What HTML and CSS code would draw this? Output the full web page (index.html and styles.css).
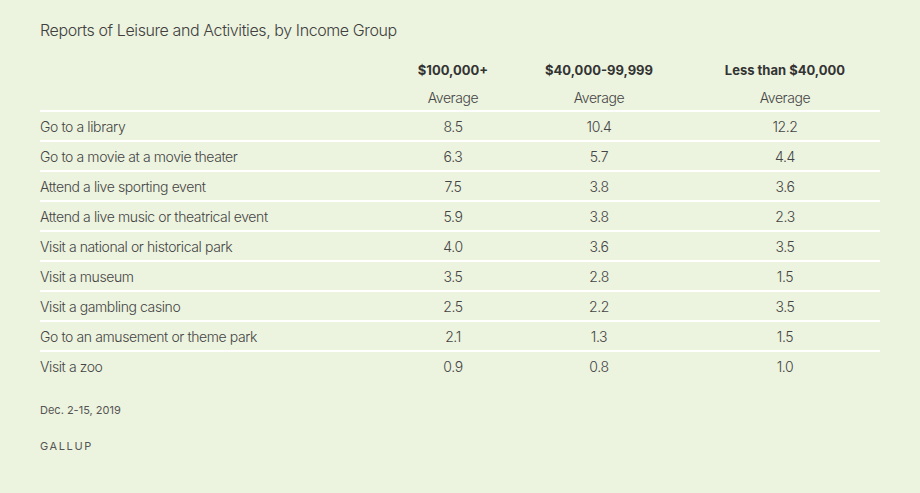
FILE: index.html
```html
<!DOCTYPE html>
<html lang="en">
<head>
<meta charset="utf-8">
<title>Reports of Leisure and Activities, by Income Group</title>
<link rel="stylesheet" href="styles.css">
</head>
<body>
<div class="frame">
  <h1 class="title">Reports of Leisure and Activities, by Income Group</h1>
  <table class="data">
    <thead>
      <tr class="group">
        <th class="label"></th>
        <th class="c1">$100,000+</th>
        <th class="c2">$40,000-99,999</th>
        <th class="c3">Less than $40,000</th>
      </tr>
      <tr class="sub">
        <th class="label"></th>
        <th>Average</th>
        <th>Average</th>
        <th>Average</th>
      </tr>
    </thead>
    <tbody>
      <tr><td class="label">Go to a library</td><td>8.5</td><td>10.4</td><td>12.2</td></tr>
      <tr><td class="label">Go to a movie at a movie theater</td><td>6.3</td><td>5.7</td><td>4.4</td></tr>
      <tr><td class="label">Attend a live sporting event</td><td>7.5</td><td>3.8</td><td>3.6</td></tr>
      <tr><td class="label">Attend a live music or theatrical event</td><td>5.9</td><td>3.8</td><td>2.3</td></tr>
      <tr><td class="label">Visit a national or historical park</td><td>4.0</td><td>3.6</td><td>3.5</td></tr>
      <tr><td class="label">Visit a museum</td><td>3.5</td><td>2.8</td><td>1.5</td></tr>
      <tr><td class="label">Visit a gambling casino</td><td>2.5</td><td>2.2</td><td>3.5</td></tr>
      <tr><td class="label">Go to an amusement or theme park</td><td>2.1</td><td>1.3</td><td>1.5</td></tr>
      <tr><td class="label">Visit a zoo</td><td>0.9</td><td>0.8</td><td>1.0</td></tr>
    </tbody>
  </table>
  <p class="date">Dec. 2-15, 2019</p>
  <p class="source">GALLUP</p>
</div>
</body>
</html>
```
FILE: styles.css
```css
html, body {
  margin: 0;
  padding: 0;
}
body {
  background: #ecf3de;
  font-family: Inter, "Liberation Sans", Arial, sans-serif;
  color: #454545;
}
.frame {
  box-sizing: border-box;
  width: 920px;
  height: 493px;
  padding: 20px 40px 0 40px;
}
.title {
  margin: 0;
  font-size: 16px;
  font-weight: 300;
  line-height: 20px;
  letter-spacing: -0.4px;
  color: #404040;
}
.data {
  width: 840px;
  border-collapse: collapse;
  margin-top: 16px;
  table-layout: fixed;
  font-size: 14px;
  font-weight: 300;
  letter-spacing: -0.4px;
}
.data th, .data td {
  padding: 0;
  text-align: center;
}
.data .label {
  width: 358px;
  text-align: left;
}
.data .c1 { width: 110px; }
.data .c2 { width: 182px; }
.data .c3 { width: 190px; }
.group th {
  height: 28px;
  font-size: 13px;
  font-weight: 700;
  letter-spacing: 0;
  color: #333;
}
.sub th {
  height: 26px;
  font-weight: 300;
  font-size: 14px;
  border-bottom: 2px solid #ffffff;
  vertical-align: middle;
}
tbody td {
  height: 28px;
  border-bottom: 2px solid #ffffff;
}
tbody tr:last-child td {
  border-bottom: none;
}
.date {
  margin: 23px 0 0 0;
  font-size: 11px;
  line-height: 14px;
  color: #555;
}
.source {
  margin: 22px 0 0 0;
  font-size: 11px;
  line-height: 14px;
  letter-spacing: 1.6px;
  color: #555;
}
```
